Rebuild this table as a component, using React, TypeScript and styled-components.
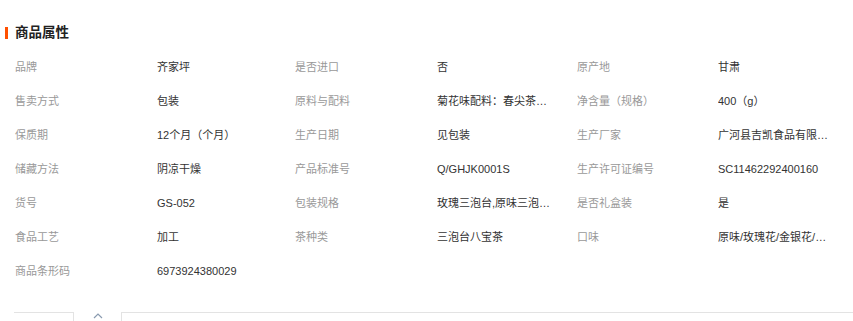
import React from 'react';
import styled, { createGlobalStyle } from 'styled-components';

type Attr = {
  label: string;
  value: string;
};

const GlobalStyle = createGlobalStyle`
  body {
    margin: 0;
    background: #fff;
    font-family: "Liberation Sans", "Noto Sans CJK SC", sans-serif;
  }
`;

const Wrapper = styled.div`
  width: 853px;
  height: 321px;
  overflow: hidden;
  display: flex;
  flex-direction: column;
`;

const Header = styled.div`
  display: flex;
  align-items: center;
  height: 20px;
  margin-top: 23px;
  padding-left: 5px;
`;

const Bar = styled.span`
  width: 3px;
  height: 12px;
  background: #ff5000;
  margin-right: 7px;
`;

const Title = styled.h2`
  margin: 0;
  font-size: 13.5px;
  font-weight: 700;
  color: #222;
  line-height: 20px;
`;

const Grid = styled.div`
  display: grid;
  grid-template-columns: 142px 138px 142px 140px 141px 1fr;
  grid-auto-rows: 34px;
  margin-top: 7px;
  padding-left: 15px;
  font-size: 11px;
  line-height: 34px;
`;

const Label = styled.div`
  color: #999;
  white-space: nowrap;
`;

const Value = styled.div`
  color: #333;
  max-width: 114px;
  white-space: nowrap;
  overflow: hidden;
  text-overflow: ellipsis;
`;

const Footer = styled.div`
  display: flex;
  margin-top: 24px;
  height: 20px;
`;

const FooterLeft = styled.div`
  width: 59px;
  margin-left: 14px;
  border-top: 1px solid #e3e3e3;
  border-right: 1px solid #e3e3e3;
`;

const Toggle = styled.div`
  width: 47px;
  display: flex;
  justify-content: center;
  padding-top: 1px;
`;

const FooterRight = styled.div`
  flex: 1;
  border-top: 1px solid #e3e3e3;
  border-left: 1px solid #e3e3e3;
`;

const attrs: Attr[] = [
  { label: '品牌', value: '齐家坪' },
  { label: '是否进口', value: '否' },
  { label: '原产地', value: '甘肃' },
  { label: '售卖方式', value: '包装' },
  { label: '原料与配料', value: '菊花味配料：春尖茶、菊花、冰糖、枸杞、红枣' },
  { label: '净含量（规格）', value: '400（g）' },
  { label: '保质期', value: '12个月（个月）' },
  { label: '生产日期', value: '见包装' },
  { label: '生产厂家', value: '广河县吉凯食品有限公司' },
  { label: '储藏方法', value: '阴凉干燥' },
  { label: '产品标准号', value: 'Q/GHJK0001S' },
  { label: '生产许可证编号', value: 'SC11462292400160' },
  { label: '货号', value: 'GS-052' },
  { label: '包装规格', value: '玫瑰三泡台,原味三泡台,菊花三泡台' },
  { label: '是否礼盒装', value: '是' },
  { label: '食品工艺', value: '加工' },
  { label: '茶种类', value: '三泡台八宝茶' },
  { label: '口味', value: '原味/玫瑰花/金银花/菊花' },
  { label: '商品条形码', value: '6973924380029' },
];

const App = () => (
  <Wrapper>
    <GlobalStyle />
    <Header>
      <Bar />
      <Title>商品属性</Title>
    </Header>
    <Grid>
      {attrs.map((a) => (
        <React.Fragment key={a.label}>
          <Label>{a.label}</Label>
          <Value title={a.value}>{a.value}</Value>
        </React.Fragment>
      ))}
    </Grid>
    <Footer>
      <FooterLeft />
      <Toggle>
        <svg width='10' height='6' viewBox='0 0 10 6'>
          <polyline points='1,5 5,1 9,5' fill='none' stroke='#8a9bb0' strokeWidth='1.2' />
        </svg>
      </Toggle>
      <FooterRight />
    </Footer>
  </Wrapper>
);

export default App;
